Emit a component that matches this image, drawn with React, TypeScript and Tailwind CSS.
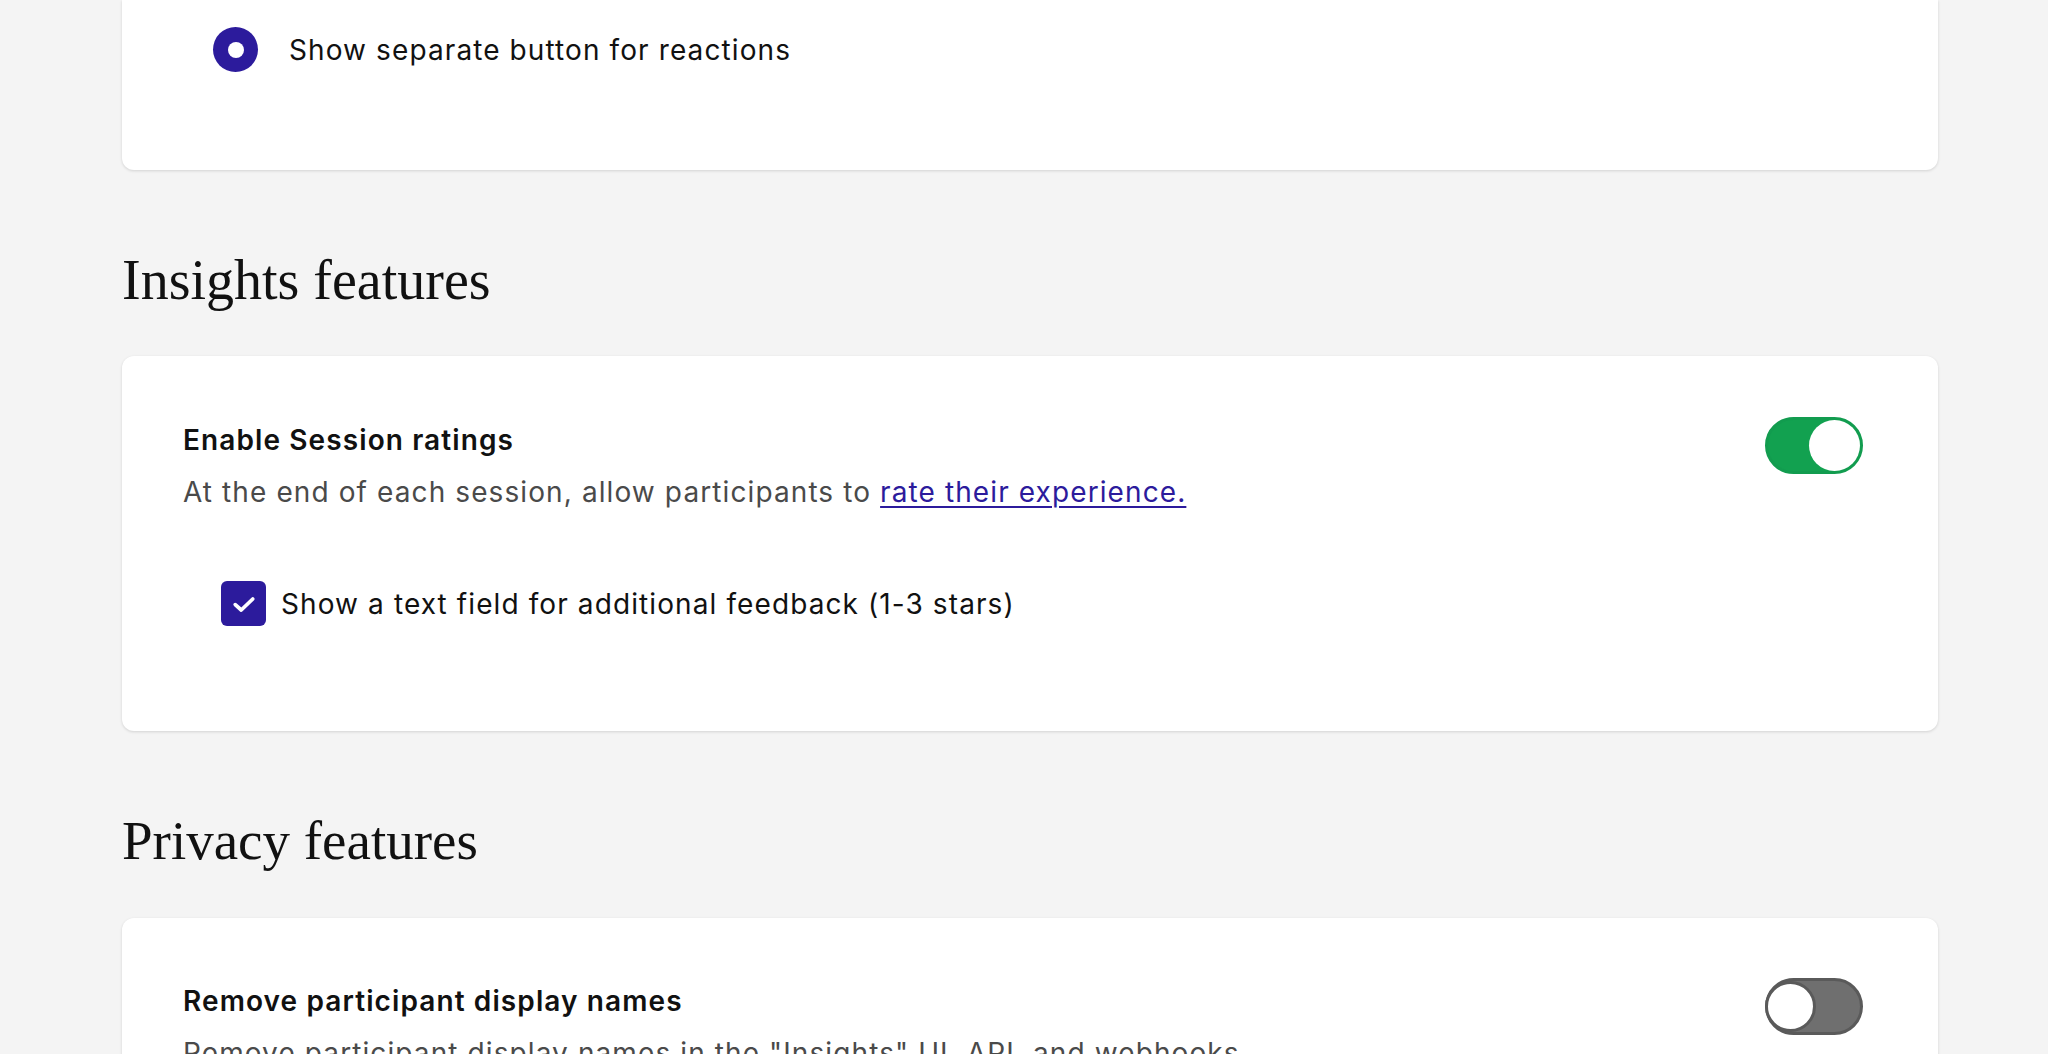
import { useState } from 'react';

function Toggle({ on, onChange }: { on: boolean; onChange: (v: boolean) => void }) {
  return (
    <button
      type="button"
      onClick={() => onChange(!on)}
      className={
        on
          ? 'flex h-[57px] w-[98px] shrink-0 items-center justify-end rounded-full border-[3px] border-[#129c4f] bg-[#12a150]'
          : 'flex h-[57px] w-[98px] shrink-0 items-center justify-start rounded-full border-[3px] border-[#5a5a5a] bg-[#6f6f6f]'
      }
    >
      <span
        className={
          on
            ? 'block h-[51px] w-[51px] rounded-full bg-white'
            : 'block h-[51px] w-[51px] rounded-full border-[3px] border-[#5a5a5a] bg-white -ml-[3px]'
        }
      />
    </button>
  );
}

export default function App() {
  const [ratings, setRatings] = useState(true);
  const [feedback, setFeedback] = useState(true);
  const [hideNames, setHideNames] = useState(false);

  return (
    <div className="min-h-screen bg-[#f4f4f4] pb-20 font-['Inter','Noto_Sans',sans-serif] tracking-[1.1px] text-[#111]">
      <div className="pl-[122px] pr-[110px]">
        {/* reactions card, scrolled partly out of view */}
        <section className="h-[170px] rounded-b-xl bg-white shadow-[0_1px_3px_rgba(0,0,0,0.14)]">
          <label className="flex items-center gap-[31px] pl-[91px] pt-[27px]">
            <span className="flex h-[45px] w-[45px] items-center justify-center rounded-full bg-[#2c1b9c]">
              <span className="h-[16px] w-[16px] rounded-full bg-white" />
            </span>
            <span className="text-[28px] leading-[36px]">Show separate button for reactions</span>
          </label>
        </section>

        <h2 className="mb-[44px] mt-[78px] font-['Liberation_Serif','Times_New_Roman',serif] text-[56px] leading-[64px] tracking-normal text-[#111]">
          Insights features
        </h2>

        <section className="rounded-xl bg-white pb-[105px] pl-[61px] pr-[75px] pt-[66px] shadow-[0_1px_3px_rgba(0,0,0,0.14)]">
          <div className="flex items-start justify-between">
            <div>
              <h3 className="text-[28px] font-semibold leading-[36px]">Enable Session ratings</h3>
              <p className="mt-4 text-[28px] leading-[36px] text-[#4a4a4a]">
                At the end of each session, allow participants to{' '}
                <a href="#" className="text-[#2c1b9c] underline decoration-2 underline-offset-4">
                  rate their experience.
                </a>
              </p>
            </div>
            <div className="-mt-[5px]">
              <Toggle on={ratings} onChange={setRatings} />
            </div>
          </div>
          <label className="ml-[38px] mt-[71px] flex items-center gap-[15px]">
            <button
              type="button"
              onClick={() => setFeedback(!feedback)}
              className={
                feedback
                  ? 'flex h-[45px] w-[45px] items-center justify-center rounded-[6px] bg-[#2c1b9c]'
                  : 'flex h-[45px] w-[45px] items-center justify-center rounded-[6px] border-[3px] border-[#2c1b9c] bg-white'
              }
            >
              {feedback && (
                <svg width="30" height="30" viewBox="0 0 24 24" fill="none" stroke="white" strokeWidth="3" strokeLinecap="round" strokeLinejoin="round">
                  <polyline points="5,12.5 9.8,16.8 19,8" />
                </svg>
              )}
            </button>
            <span className="text-[28px] leading-[36px]">Show a text field for additional feedback (1-3 stars)</span>
          </label>
        </section>

        <h2 className="mb-[45px] mt-[78px] font-['Liberation_Serif','Times_New_Roman',serif] text-[55px] leading-[64px] tracking-normal text-[#111]">
          Privacy features
        </h2>

        <section className="rounded-xl bg-white pb-[66px] pl-[61px] pr-[75px] pt-[65px] shadow-[0_1px_3px_rgba(0,0,0,0.14)]">
          <div className="flex items-start justify-between">
            <div>
              <h3 className="text-[28px] font-semibold leading-[36px]">Remove participant display names</h3>
              <p className="mt-4 text-[28px] leading-[36px] text-[#4a4a4a]">
                Remove participant display names in the "Insights" UI, API, and webhooks.
              </p>
            </div>
            <div className="-mt-[5px]">
              <Toggle on={hideNames} onChange={setHideNames} />
            </div>
          </div>
        </section>
      </div>
    </div>
  );
}
